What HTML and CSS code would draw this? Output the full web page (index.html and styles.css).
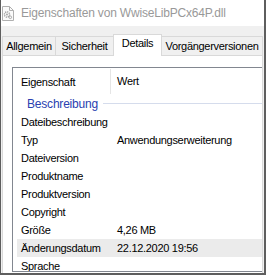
FILE: index.html
```html
<!DOCTYPE html>
<html lang="de">
<head>
<meta charset="utf-8">
<title>Eigenschaften</title>
<link rel="stylesheet" href="styles.css">
</head>
<body>
<div class="window">
  <div class="titlebar">
    <svg class="app-icon" width="12" height="15" viewBox="0 0 12 15">
      <path d="M0.5 0.5H7.5L11.5 4.5V14.5H0.5Z" fill="#fbfbfb" stroke="#b0b0b0"/>
      <path d="M7.5 0.5V4.5H11.5" fill="none" stroke="#b0b0b0"/>
      <circle cx="5" cy="8.5" r="2.6" fill="none" stroke="#9c9c9c" stroke-width="1.4" stroke-dasharray="1.2 0.8"/>
      <circle cx="5" cy="8.5" r="0.9" fill="#9c9c9c"/>
      <circle cx="8.3" cy="11.3" r="1.3" fill="none" stroke="#aaaaaa" stroke-width="1"/>
    </svg>
    <span class="title">Eigenschaften von WwiseLibPCx64P.dll</span>
  </div>
  <div class="dialog">
    <div class="tabs">
      <div class="tab tab-allgemein">Allgemein</div>
      <div class="tab tab-sicherheit">Sicherheit</div>
      <div class="tab tab-details active">Details</div>
      <div class="tab tab-vorg">Vorgängerversionen</div>
    </div>
    <div class="panel">
      <div class="list">
        <div class="list-header">
          <div class="hcol hcol1">Eigenschaft</div>
          <div class="hcol hcol2">Wert</div>
        </div>
        <div class="group">
          <span class="group-name">Beschreibung</span>
          <span class="group-line"></span>
        </div>
        <div class="row"><span class="c1">Dateibeschreibung</span><span class="c2"></span></div>
        <div class="row"><span class="c1">Typ</span><span class="c2">Anwendungserweiterung</span></div>
        <div class="row"><span class="c1">Dateiversion</span><span class="c2"></span></div>
        <div class="row"><span class="c1">Produktname</span><span class="c2"></span></div>
        <div class="row"><span class="c1">Produktversion</span><span class="c2"></span></div>
        <div class="row"><span class="c1">Copyright</span><span class="c2"></span></div>
        <div class="row"><span class="c1">Größe</span><span class="c2">4,26 MB</span></div>
        <div class="row hover"><span class="c1">Änderungsdatum</span><span class="c2">22.12.2020 19:56</span></div>
        <div class="row"><span class="c1">Sprache</span><span class="c2"></span></div>
      </div>
    </div>
  </div>
</div>
</body>
</html>
```

FILE: styles.css
```css
html, body {
  margin: 0;
  padding: 0;
  width: 266px;
  height: 275px;
  overflow: hidden;
  background: #fff;
}

body {
  font-family: "Liberation Sans", Arial, sans-serif;
  font-size: 11px;
  letter-spacing: -0.3px;
  color: #000;
}

.window {
  box-sizing: border-box;
  width: 266px;
  height: 275px;
  border-left: 1px solid #5e5e5e;
  border-right: 2px solid #5e5e5e;
  border-bottom: 2px solid #5e5e5e;
  display: flex;
  flex-direction: column;
  background: #f0f0f0;
}

.titlebar {
  height: 26px;
  flex: 0 0 26px;
  background: #fff;
  display: flex;
  align-items: center;
}

.app-icon {
  margin-left: 1px;
  margin-top: 1px;
  flex: 0 0 auto;
}

.title {
  margin-left: 7px;
  font-size: 12px;
  letter-spacing: -0.18px;
  color: #999;
  white-space: nowrap;
}

.dialog {
  flex: 1;
  display: flex;
  flex-direction: column;
  padding: 8px 0 0 1px;
  min-height: 0;
}

.tabs {
  display: flex;
  align-items: flex-end;
  height: 21px;
  flex: 0 0 21px;
}

.tab {
  box-sizing: border-box;
  height: 19px;
  border: 1px solid #d9d9d9;
  border-bottom: none;
  background: #f0f0f0;
  text-align: center;
  line-height: 18px;
  white-space: nowrap;
  margin-left: -1px;
}

.tab-allgemein { width: 54px; margin-left: 0; }
.tab-sicherheit { width: 59px; }
.tab-details { width: 49px; }
.tab-vorg { width: 102px; }

.tab.active {
  position: relative;
  z-index: 1;
  height: 22px;
  margin-bottom: -1px;
  background: #fff;
  line-height: 17px;
}

.panel {
  box-sizing: border-box;
  width: 261px;
  flex: 1;
  min-height: 0;
  border: 1px solid #d9d9d9;
  border-bottom: none;
  background: #fff;
  overflow: hidden;
  padding: 11px 0 0 9px;
}

.list {
  box-sizing: border-box;
  width: 300px;
  height: 205px;
  border: 1px solid #828790;
  overflow: hidden;
  background: #fff;
}

.list-header {
  display: flex;
  height: 26px;
  line-height: 27px;
}

.hcol1 {
  box-sizing: border-box;
  width: 98px;
  padding-left: 8px;
  border-right: 1px solid #e5e5e5;
  margin-top: 1px;
  line-height: 26px;
}

.hcol2 {
  padding-left: 6px;
}

.group {
  display: flex;
  align-items: center;
  height: 19px;
  padding-left: 14px;
}

.group-name {
  font-size: 12px;
  letter-spacing: -0.2px;
  color: #2a41b0;
  white-space: nowrap;
  line-height: 19px;
  padding-top: 1px;
}

.group-line {
  flex: 1;
  height: 1px;
  margin-left: 5px;
  background: #d5dcec;
}

.row {
  display: flex;
  height: 18px;
  line-height: 18px;
  margin-left: 4px;
  padding-left: 4px;
  white-space: nowrap;
}

.row.hover {
  background: #ebebeb;
}

.c1 {
  width: 96px;
  flex: 0 0 96px;
}
```
